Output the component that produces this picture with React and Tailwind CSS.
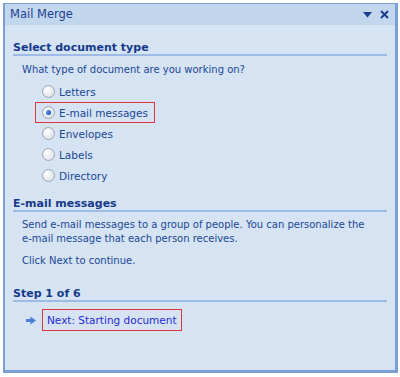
import React from 'react';

const options = ['Letters', 'E-mail messages', 'Envelopes', 'Labels', 'Directory'];

const Radio = ({ checked }) => (
  <span className="relative grid h-[13px] w-[13px] place-items-center rounded-full border border-[#9aa6b8] bg-[radial-gradient(circle_at_35%_35%,#ffffff,#d4d8de)]">
    {checked && <span className="h-[5px] w-[5px] rounded-full bg-[radial-gradient(circle_at_35%_35%,#4aa0ff,#0a2f8a)]" />}
  </span>
);

const SectionTitle = ({ children }) => (
  <div className="mr-[8px] border-b-2 border-[#9dbbe6] text-[11px] font-bold leading-[13px] text-[#15398a]">
    {children}
  </div>
);

const App = () => {
  return (
    <div className="h-[377px] w-[400px] bg-white pb-[4px] pl-[3px] pr-[2px] pt-[3px] font-['DejaVu_Sans',sans-serif]">
      <div className="flex h-full flex-col border-b-[3px] border-l-2 border-r-[3px] border-t border-[#7b9fd4] bg-[#d5e3f3]">
        <div className="flex h-[21px] items-center justify-between bg-[#c2d6ee] pl-[5px] pr-[6px] text-[11.5px] text-[#1b3f8e]">
          <span>Mail Merge</span>
          <div className="flex items-center gap-[8px]">
            <svg width="9" height="6" viewBox="0 0 9 6"><path d="M0 0h9L4.5 5.5z" fill="#1b3f8e" /></svg>
            <svg width="9" height="9" viewBox="0 0 9 9"><path d="M1 1l7 7M8 1L1 8" stroke="#1b3f8e" strokeWidth="2" /></svg>
          </div>
        </div>

        <div className="pl-[8px] pt-[16px] text-[10px] text-[#1b4795]">
          <SectionTitle>Select document type</SectionTitle>
          <p className="ml-[9px] mt-[7px] leading-[14px]">What type of document are you working on?</p>
          <div className="ml-[29px] mt-[4px] flex flex-col">
            {options.map((opt, i) => (
              <div
                key={opt}
                className={`flex h-[21px] w-fit items-center gap-[4px] ${i === 1 ? '-ml-[7px] border border-[#e0353a] pl-[6px] pr-[6px]' : ''}`}
              >
                <Radio checked={i === 1} />
                <span className="text-[10.5px] leading-[14px]">{opt}</span>
              </div>
            ))}
          </div>

          <div className="mt-[11px]">
            <SectionTitle>E-mail messages</SectionTitle>
          </div>
          <p className="ml-[9px] mr-[22px] mt-[6px] leading-[14px]">
            Send e-mail messages to a group of people. You can personalize the e-mail message that each person receives.
          </p>
          <p className="ml-[9px] mt-[8px] leading-[14px]">Click Next to continue.</p>

          <div className="mt-[19px]">
            <SectionTitle>Step 1 of 6</SectionTitle>
          </div>
          <div className="ml-[13px] mt-[7px] flex items-center gap-[6px]">
            <svg width="10" height="9" viewBox="0 0 10 9">
              <path d="M0 3h4.5V0.5L10 4.5 4.5 8.5V6H0z" fill="#4a7fd6" />
            </svg>
            <span className="border border-[#e0353a] px-[4px] py-[3px] text-[10.5px] leading-[14px] text-[#2a2ad4]">Next: Starting document</span>
          </div>
        </div>
      </div>
    </div>
  );
};

export default App;
